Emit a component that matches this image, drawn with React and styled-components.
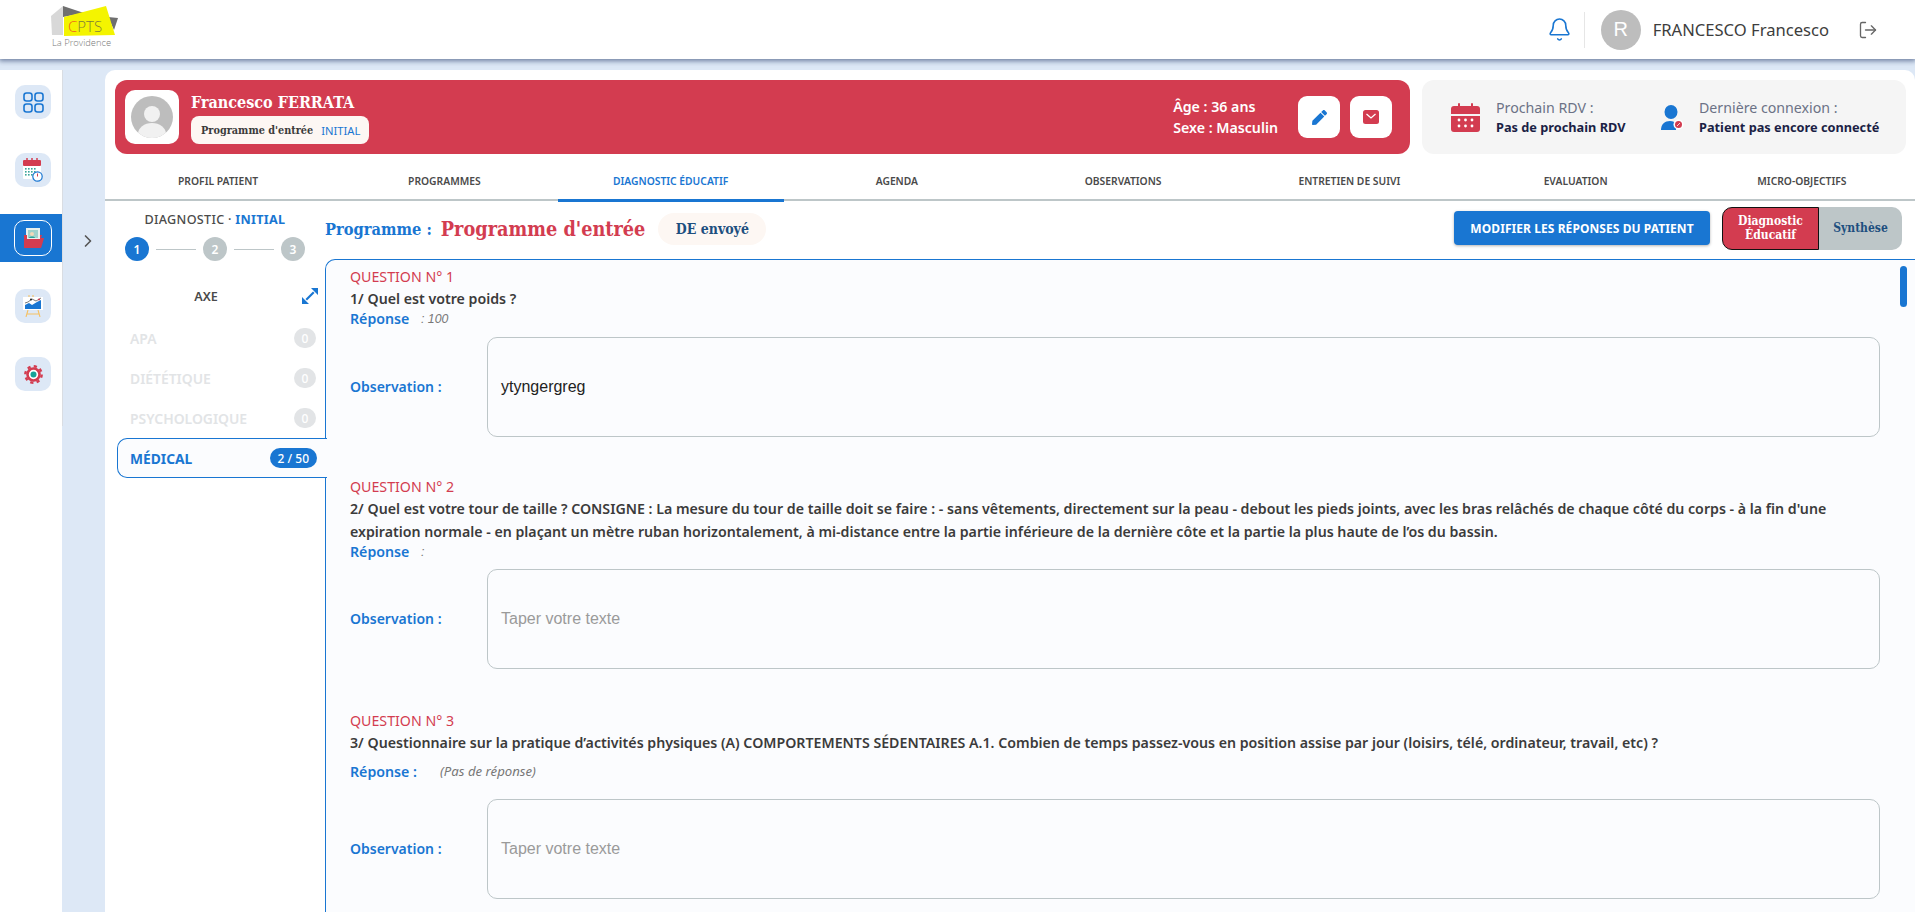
import React from 'react';
import styled, { createGlobalStyle } from 'styled-components';
import { Bell, LogOut, ChevronRight } from 'lucide-react';
import { FaPen } from 'react-icons/fa';

const BLUE = '#1976d2';
const RED = '#d33c50';
const SLAB = '"DejaVu Serif Condensed", "DejaVu Serif", serif';

const Global = createGlobalStyle`
  html, body { margin: 0; padding: 0; height: 912px; overflow: hidden; background: #dde8f6; }
  * { box-sizing: border-box; }
  body { font-family: "Noto Sans", sans-serif; }
`;

const Page = styled.div`height: 912px; display: flex; flex-direction: column; overflow: hidden;`;
const Header = styled.header`
  height: 59px; flex: none; background: #fff; display: flex; align-items: center; justify-content: space-between;
  padding: 0 37px 0 51px; box-shadow: 0 1px 5px 1px rgba(70, 90, 130, .75);
  position: relative; z-index: 2;
`;
const LogoWrap = styled.div`display: flex; margin-bottom: 7px;`;
const HeaderRight = styled.div`display: flex; align-items: center;`;
const BellWrap = styled.div`display: flex; width: 25px; margin-right: 12px; color: ${BLUE};`;
const Divider = styled.div`width: 1px; height: 36px; background: #e6e6e6; margin-right: 16px;`;
const UserCircle = styled.div`
  width: 40px; height: 40px; border-radius: 50%; background: #bdbdbd; color: #fff;
  font: 20px "Liberation Sans", sans-serif; display: flex; align-items: center; justify-content: center; margin-right: 12px;
`;
const UserName = styled.div`font-size: 16.6px; color: #3d3d3d; margin-right: 29px; white-space: nowrap;`;
const LogoutWrap = styled.div`display: flex; color: #666;`;

const Body = styled.div`flex: 1; display: flex; margin-top: 11px; min-height: 0;`;
const Sidebar = styled.nav`width: 62px; flex: none; background: #fff;`;
const Rail = styled.div`height: 356px; box-shadow: 1px 0 0 #d9dde3; padding-top: 8px; display: flex; flex-direction: column;`;
const NavRow = styled.div`
  height: 48px; flex: none; margin-bottom: 20px; display: flex; align-items: center; justify-content: center; padding-left: 4px;
  background: ${p => (p.$active ? BLUE : 'transparent')};
`;
const NavTile = styled.div`
  width: ${p => (p.$active ? 38 : 36)}px; height: ${p => (p.$active ? 36 : 34)}px; border-radius: 10px; background: ${p => (p.$active ? BLUE : '#dde8f6')};
  border: ${p => (p.$active ? '1px solid #fff' : 'none')};
  display: flex; align-items: center; justify-content: center;
`;
const Gutter = styled.div`width: 43px; flex: none; display: flex; justify-content: center; padding: 161px 0 0 9px; color: #555;`;
const Panel = styled.main`flex: 1; min-width: 0; background: #fff; border-radius: 10px 10px 0 0; display: flex; flex-direction: column;`;

const TopCards = styled.div`display: flex; gap: 12px; padding: 10px 9px 0 10px; height: 84px; flex: none;`;
const PatientCard = styled.section`
  width: 1295px; background: ${RED}; border-radius: 12px; display: flex; align-items: center; padding: 0 18px 0 10px; color: #fff;
`;
const AvatarBox = styled.div`width: 54px; height: 54px; background: #fff; border-radius: 10px; display: flex; align-items: center; justify-content: center; margin-right: 12px;`;
const Identity = styled.div`flex: 1; display: flex; flex-direction: column; height: 54px;`;
const PatientName = styled.div`font: 700 16px/25px ${SLAB}; color: #fff;`;
const ProgramPill = styled.div`
  margin-top: 1px; height: 28px; width: 178px; background: #fdf7f3; border-radius: 8px; display: flex; align-items: flex-start; padding: 8px 0 0 10px;
`;
const PillText = styled.span`font: 700 10.8px/14px ${SLAB}; color: #3b3b3b; height: 12px; overflow: hidden; margin-right: 8px; white-space: nowrap;`;
const PillTag = styled.span`font-size: 11.2px; line-height: 14px; color: ${BLUE};`;
const Demo = styled.div`font-size: 14.2px; font-weight: 600; line-height: 21px; margin-right: 20px; color: #fff;`;
const SquareBtn = styled.div`
  width: 42px; height: 42px; background: #fff; border-radius: 9px; display: flex; align-items: center; justify-content: center; margin-left: ${p => p.$gap || 0}px; color: ${BLUE};
`;
const InfoCard = styled.section`flex: 1; background: #f5f5f5; border-radius: 12px; display: flex; align-items: center; padding: 0 0 0 29px;`;
const InfoItem = styled.div`display: flex; align-items: center; gap: ${p => p.$gap}px; width: ${p => p.$w}px;`;
const InfoLabel = styled.div`font-size: 14.2px; line-height: 20px; color: #6c7286;`;
const InfoValue = styled.div`font-size: 12.75px; font-weight: 700; line-height: 18px; color: #1b1f45; white-space: nowrap;`;

const Tabs = styled.div`height: 47px; flex: none; display: grid; grid-template-columns: repeat(8, 1fr); border-bottom: 2px solid #bdc6c8;`;
const Tab = styled.div`
  height: ${p => (p.$active ? 48 : 45)}px; padding-top: 9px; display: flex; align-items: center; justify-content: center; font-size: 10.3px; font-weight: 600;
  color: ${p => (p.$active ? BLUE : '#4a4a4a')}; border-bottom: ${p => (p.$active ? `3px solid ${BLUE}` : 'none')};
`;

const Work = styled.div`flex: 1; min-height: 0; display: flex;`;
const LeftCol = styled.aside`width: 220px; flex: none; padding: 9px 0 0 12px; position: relative; z-index: 1;`;
const DiagTitle = styled.div`text-align: center; font-size: 12.6px; font-weight: 500; line-height: 20px; letter-spacing: .3px; color: #4a4a4a; padding-right: 12px;`;
const DiagStrong = styled.span`color: ${BLUE}; font-weight: 700;`;
const Stepper = styled.div`display: flex; align-items: center; padding: 7px 0 0 8px; width: 188px;`;
const Step = styled.div`
  width: 24px; height: 24px; flex: none; border-radius: 50%; background: ${p => (p.$on ? BLUE : '#bdc6c8')}; color: #fff;
  font-size: 12px; font-weight: 600; display: flex; align-items: center; justify-content: center;
`;
const StepLine = styled.div`flex: 1; height: 1px; background: #bdc6c8; margin: 0 7px;`;
const AxeHead = styled.div`display: flex; align-items: center; height: 24px; margin-top: 23px; padding-right: 7px;`;
const AxeTitle = styled.div`flex: 1; text-align: center; font-size: 12.6px; font-weight: 600; color: #4a4a4a; padding-right: 7px;`;
const AxeList = styled.div`margin-top: 10px;`;
const AxeItem = styled.div`
  height: 40px; display: flex; align-items: center; justify-content: space-between; padding: 0 9px 0 13px;
  font-size: 13.9px; font-weight: 600; color: #e2e4e6;
`;
const AxeActive = styled(AxeItem)`
  color: ${BLUE}; font-weight: 700; background: #fbfcfe; border: 1px solid ${BLUE}; border-right: none; border-radius: 10px 0 0 10px;
  width: 210px; padding: 0 10px 0 12px; position: relative; font-size: 13.8px;
`;
const Count = styled.span`
  min-width: 22px; height: 20px; border-radius: 10px; background: ${p => (p.$on ? BLUE : '#e2e4e6')}; color: #fff; padding: 0 ${p => (p.$on ? 8 : 7)}px;
  font-size: 12px; font-weight: 500; display: flex; align-items: center; justify-content: center;
`;

const RightCol = styled.div`flex: 1; min-width: 0; display: flex; flex-direction: column;`;
const ProgramBar = styled.div`height: 58px; flex: none; display: flex; align-items: center; padding-right: 13px;`;
const ProgLabel = styled.div`font: 700 16.3px/1 ${SLAB}; color: ${BLUE}; margin-right: 9px;`;
const ProgName = styled.div`font: 700 19.7px/1 ${SLAB}; color: ${RED}; margin-right: 13px;`;
const Chip = styled.div`height: 32px; width: 108px; background: #fdf7f3; border-radius: 16px; display: flex; align-items: center; justify-content: center; font: 700 14px/1 ${SLAB}; color: #1d4f7f; margin-top: -2px;`;
const Spacer = styled.div`flex: 1;`;
const PrimaryBtn = styled.div`
  width: 256px; height: 34px; background: ${BLUE}; color: #fff; border-radius: 4px; display: flex; align-items: center; justify-content: center;
  font-size: 12px; font-weight: 700; letter-spacing: .07px; box-shadow: 0 1px 3px rgba(0,0,0,.3); margin: -4px 12px 0 0;
`;
const Toggle = styled.div`display: flex; height: 43px; margin-top: -4px; width: 180px;`;
const ToggleOn = styled.div`
  width: 97px; background: ${RED}; color: #fff; border: 1px solid #111; border-radius: 10px 0 0 10px; display: flex; align-items: center; justify-content: center;
  text-align: center; font: 700 12px/14px ${SLAB};
`;
const ToggleOff = styled.div`
  flex: 1; background: #bdc6c8; color: #1d4f7f; border-radius: 0 10px 10px 0; display: flex; align-items: center; justify-content: center; font: 700 12px/1 ${SLAB};
`;
const Questions = styled.div`
  flex: 1; min-height: 0; overflow: hidden; position: relative; background: #fbfcfe; border-top: 1px solid ${BLUE}; border-left: 1px solid ${BLUE};
  border-radius: 10px 0 0 0; padding: 6px 35px 0 24px;
`;
const Thumb = styled.div`position: absolute; top: 6px; right: 8px; width: 7px; height: 41px; border-radius: 4px; background: ${BLUE};`;
const Question = styled.article`margin-bottom: ${p => p.$mb}px;`;
const QNum = styled.div`font-size: 14.2px; line-height: ${p => p.$lh || 21}px; color: ${RED};`;
const QText = styled.div`font-size: 14.2px; font-weight: 600; line-height: 23px; color: #3b3b3b;`;
const Answer = styled.div`display: flex; align-items: center; height: ${p => p.$h || 17}px; margin-top: ${p => p.$mt || 0}px;`;
const AnswerLabel = styled.span`font-size: 14.2px; font-weight: 600; color: ${BLUE}; width: ${p => p.$w}px; flex: none;`;
const AnswerValue = styled.span`font: italic 12.3px "Liberation Sans", sans-serif; color: #777;`;
const AnswerNote = styled.span`font-size: 13.2px; font-style: italic; color: #777;`;
const ObsRow = styled.div`display: flex; align-items: center; margin-top: ${p => p.$mt}px;`;
const ObsLabel = styled.div`width: 137px; flex: none; font-size: 14px; font-weight: 600; color: ${BLUE}; padding-bottom: 2px;`;
const ObsBox = styled.div`
  flex: 1; height: 100px; border: 1px solid #bdc6c8; border-radius: 10px; display: flex; align-items: center; padding: 0 13px;
  font: 16px "Liberation Sans", sans-serif; color: ${p => (p.$empty ? '#9a9a9a' : '#222')};
`;

const Logo = () => (
  <svg width="68" height="42" viewBox="0 0 68 42" overflow="visible">
    <polygon points="0,11 12,1 12,30 1,30" fill="#d8d8d8" />
    <polygon points="12,1 33,8 12,12" fill="#6f6f6f" />
    <polygon points="57,12 67,13 63,25" fill="#6f6f6f" />
    <polygon points="13,12 55,1 64,30 13,31" fill="#f4f400" />
    <text x="17" y="27" fontFamily="Open Sans" fontWeight="300" fontSize="15" fill="#7d7d3a"><tspan fill="#ef5a1e">C</tspan>PTS</text>
    <text x="1" y="41" fontFamily="Open Sans" fontWeight="300" fontSize="9.400" fill="#777">La Providence</text>
  </svg>
);
const GridIcon = () => (
  <svg width="21" height="21" viewBox="0 0 21 21" fill="none" stroke={BLUE} strokeWidth="1.6">
    <rect x="1" y="1" width="8" height="8" rx="2.500" /><rect x="12" y="1" width="8" height="8" rx="2.500" />
    <rect x="1" y="12" width="8" height="8" rx="2.500" /><rect x="12" y="12" width="8" height="8" rx="2.500" />
  </svg>
);
const CalClockIcon = () => (
  <svg width="20" height="24" viewBox="0 0 20 24">
    <rect x="0" y="2" width="18" height="19" rx="1" fill="#fff" />
    <rect x="0" y="2" width="18" height="6" rx="1" fill={RED} />
    <path d="M4 0v4M9 0v4M14 0v4" stroke={RED} strokeWidth="1.500" />
    <g fill="#3aa59b">
      {[2, 5, 8, 11].map(x => [10, 13, 16].map(y => <rect key={`${x}-${y}`} x={x} y={y} width="1.600" height="1.600" />))}
    </g>
    <circle cx="14.500" cy="18.500" r="4.700" fill="#fff" stroke={BLUE} strokeWidth="1.200" />
    <path d="M14.500 15.500v3" stroke={RED} strokeWidth="1" fill="none" />
  </svg>
);
const FolderIcon = () => (
  <svg width="21" height="20" viewBox="0 0 21 20">
    <rect x="3" y="0" width="14" height="12" fill="#e8f0ee" />
    <rect x="5" y="2" width="10" height="8" fill="#9fd2cc" />
    <circle cx="9" cy="6" r="2" fill="#f3d9b8" />
    <path d="M6 10c0-2 6-2 6 0z" fill="#2aa198" />
    <path d="M1 7h3v4h13V7h2l-1 3h3l-2 7-1 3H1z" fill={RED} />
  </svg>
);
const ChartIcon = () => (
  <svg width="20" height="22" viewBox="0 0 20 22">
    <path d="M5 15l-2 7M15 15l2 7M4 19h12M6 0v2M10 0v2" stroke="#f5c164" strokeWidth="1.100" fill="none" />
    <rect x="0" y="2" width="20" height="13" fill="#fff" />
    <path d="M2 14V10l4-2 3 2 5-3 4-2v9z" fill={BLUE} />
    <path d="M2 8l3-1 4-3 4 2 5-3" stroke="#222" strokeWidth=".6" fill="none" />
    <circle cx="16" cy="4.500" r="1" fill={RED} /><circle cx="8" cy="4.500" r="1" fill="#222" />
  </svg>
);
const GearIcon = () => (
  <svg width="19" height="19" viewBox="0 0 19 19">
    <circle cx="9.500" cy="9.500" r="8.200" fill="none" stroke={RED} strokeWidth="2.400" strokeDasharray="3.200 3.240" />
    <circle cx="9.500" cy="9.500" r="6" fill="#fff" stroke={RED} strokeWidth="2.600" />
    <circle cx="9.500" cy="9.500" r="3" fill="#17a398" />
  </svg>
);
const Avatar = () => (
  <svg width="42" height="42" viewBox="0 0 42 42">
    <defs><clipPath id="av"><circle cx="21" cy="21" r="21" /></clipPath></defs>
    <circle cx="21" cy="21" r="21" fill="#bdbdbd" />
    <g clipPath="url(#av)" fill="#f1f1f1">
      <circle cx="21" cy="18" r="8" />
      <ellipse cx="21" cy="38" rx="14" ry="11" />
    </g>
  </svg>
);
const MailIcon = () => (
  <svg width="16" height="14" viewBox="0 0 16 14">
    <rect width="16" height="14" rx="2.500" fill={RED} />
    <path d="M3.500 4l4.500 4 4.500-4" stroke="#fff" strokeWidth="1.300" fill="none" />
  </svg>
);
const CalendarIcon = () => (
  <svg width="29" height="29" viewBox="0 0 29 29">
    <path d="M3 3h23a3 3 0 0 1 3 3v5H0V6a3 3 0 0 1 3-3z" fill={RED} />
    <path d="M0 13h29v13a3 3 0 0 1-3 3H3a3 3 0 0 1-3-3z" fill={RED} />
    <rect x="7" y="0" width="2" height="6" rx="1" fill={RED} /><rect x="20" y="0" width="2" height="6" rx="1" fill={RED} />
    <g fill="#fff">
      {[8, 14.5, 21].map(x => [17, 23].map(y => <circle key={`${x}-${y}`} cx={x} cy={y} r="1.400" />))}
    </g>
  </svg>
);
const PersonIcon = () => (
  <svg width="23" height="25" viewBox="0 0 23 25">
    <ellipse cx="10" cy="7" rx="6.500" ry="7" fill={BLUE} />
    <path d="M0 25c0-6 4-9 9-9 3 0 5 1 6 3v6z" fill={BLUE} />
    <circle cx="17.500" cy="19.500" r="5" fill="#fff" />
    <circle cx="17.500" cy="19.500" r="3.500" fill={RED} />
    <path d="M16 21l3-3" stroke="#fff" strokeWidth=".800" />
  </svg>
);
const ExpandIcon = () => (
  <svg width="16" height="16" viewBox="0 0 16 16" fill={BLUE}>
    <path d="M3.500 11L11 3.500l1.500 1.500L5 12.500z" />
    <path d="M9 0h7v7zM0 9l7 7H0z" />
  </svg>
);

const tabs = ['PROFIL PATIENT', 'PROGRAMMES', 'DIAGNOSTIC ÉDUCATIF', 'AGENDA', 'OBSERVATIONS', 'ENTRETIEN DE SUIVI', 'EVALUATION', 'MICRO-OBJECTIFS'];
const axes = ['APA', 'DIÉTÉTIQUE', 'PSYCHOLOGIQUE'];

export default function App() {
  return (
    <Page>
      <Global />
      <Header>
        <LogoWrap><Logo /></LogoWrap>
        <HeaderRight>
          <BellWrap><Bell size={25} strokeWidth={1.5} /></BellWrap>
          <Divider />
          <UserCircle>R</UserCircle>
          <UserName>FRANCESCO Francesco</UserName>
          <LogoutWrap><LogOut size={20} strokeWidth={1.6} /></LogoutWrap>
        </HeaderRight>
      </Header>
      <Body>
        <Sidebar>
          <Rail>
            <NavRow><NavTile><GridIcon /></NavTile></NavRow>
            <NavRow><NavTile><CalClockIcon /></NavTile></NavRow>
            <NavRow $active><NavTile $active><FolderIcon /></NavTile></NavRow>
            <NavRow><NavTile><ChartIcon /></NavTile></NavRow>
            <NavRow><NavTile><GearIcon /></NavTile></NavRow>
          </Rail>
        </Sidebar>
        <Gutter><ChevronRight size={20} strokeWidth={2} /></Gutter>
        <Panel>
          <TopCards>
            <PatientCard>
              <AvatarBox><Avatar /></AvatarBox>
              <Identity>
                <PatientName>Francesco FERRATA</PatientName>
                <ProgramPill>
                  <PillText>Programme d'entrée</PillText>
                  <PillTag>INITIAL</PillTag>
                </ProgramPill>
              </Identity>
              <Demo>Âge : 36 ans<br />Sexe : Masculin</Demo>
              <SquareBtn><FaPen size={15} /></SquareBtn>
              <SquareBtn $gap={10}><MailIcon /></SquareBtn>
            </PatientCard>
            <InfoCard>
              <InfoItem $gap={16} $w={210}>
                <CalendarIcon />
                <div>
                  <InfoLabel>Prochain RDV :</InfoLabel>
                  <InfoValue>Pas de prochain RDV</InfoValue>
                </div>
              </InfoItem>
              <InfoItem $gap={15} $w={240}>
                <PersonIcon />
                <div>
                  <InfoLabel>Dernière connexion :</InfoLabel>
                  <InfoValue>Patient pas encore connecté</InfoValue>
                </div>
              </InfoItem>
            </InfoCard>
          </TopCards>
          <Tabs>
            {tabs.map((t, i) => <Tab key={t} $active={i === 2}>{t}</Tab>)}
          </Tabs>
          <Work>
            <LeftCol>
              <DiagTitle>DIAGNOSTIC · <DiagStrong>INITIAL</DiagStrong></DiagTitle>
              <Stepper>
                <Step $on>1</Step><StepLine /><Step>2</Step><StepLine /><Step>3</Step>
              </Stepper>
              <AxeHead><AxeTitle>AXE</AxeTitle><ExpandIcon /></AxeHead>
              <AxeList>
                {axes.map(a => <AxeItem key={a}>{a}<Count>0</Count></AxeItem>)}
                <AxeActive>MÉDICAL<Count $on>2 / 50</Count></AxeActive>
              </AxeList>
            </LeftCol>
            <RightCol>
              <ProgramBar>
                <ProgLabel>Programme :</ProgLabel>
                <ProgName>Programme d'entrée</ProgName>
                <Chip>DE envoyé</Chip>
                <Spacer />
                <PrimaryBtn>MODIFIER LES RÉPONSES DU PATIENT</PrimaryBtn>
                <Toggle>
                  <ToggleOn>Diagnostic Éducatif</ToggleOn>
                  <ToggleOff>Synthèse</ToggleOff>
                </Toggle>
              </ProgramBar>
              <Questions>
                <Thumb />
                <Question $mb={40}>
                  <QNum>QUESTION N° 1</QNum>
                  <QText>1/ Quel est votre poids ?</QText>
                  <Answer><AnswerLabel $w={71}>Réponse</AnswerLabel><AnswerValue>: 100</AnswerValue></Answer>
                  <ObsRow $mt={10}><ObsLabel>Observation :</ObsLabel><ObsBox>ytyngergreg</ObsBox></ObsRow>
                </Question>
                <Question $mb={41}>
                  <QNum $lh={20}>QUESTION N° 2</QNum>
                  <QText>2/ Quel est votre tour de taille ? CONSIGNE : La mesure du tour de taille doit se faire : - sans vêtements, directement sur la peau - debout les pieds joints, avec les bras relâchés de chaque côté du corps - à la fin d'une expiration normale - en plaçant un mètre ruban horizontalement, à mi-distance entre la partie inférieure de la dernière côte et la partie la plus haute de l’os du bassin.</QText>
                  <Answer><AnswerLabel $w={71}>Réponse</AnswerLabel><AnswerValue>:</AnswerValue></Answer>
                  <ObsRow $mt={9}><ObsLabel>Observation :</ObsLabel><ObsBox $empty>Taper votre texte</ObsBox></ObsRow>
                </Question>
                <Question $mb={0}>
                  <QNum>QUESTION N° 3</QNum>
                  <QText>3/ Questionnaire sur la pratique d’activités physiques (A) COMPORTEMENTS SÉDENTAIRES A.1. Combien de temps passez-vous en position assise par jour (loisirs, télé, ordinateur, travail, etc) ?</QText>
                  <Answer $h={20} $mt={7}><AnswerLabel $w={90}>Réponse :</AnswerLabel><AnswerNote>(Pas de réponse)</AnswerNote></Answer>
                  <ObsRow $mt={18}><ObsLabel>Observation :</ObsLabel><ObsBox $empty>Taper votre texte</ObsBox></ObsRow>
                </Question>
              </Questions>
            </RightCol>
          </Work>
        </Panel>
      </Body>
    </Page>
  );
}
